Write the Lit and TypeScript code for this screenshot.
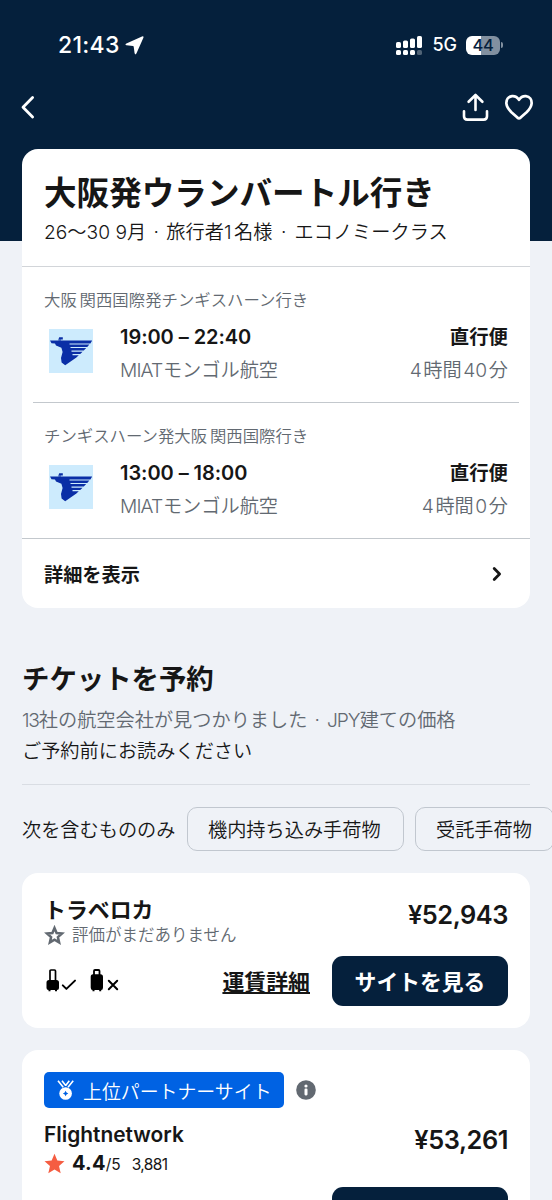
import { LitElement, html, css, svg } from "lit";
import { customElement, property } from "lit/decorators.js";

const airlineLogo = html`<svg class="logo" width="44" height="44" viewBox="0 0 44 44">
  <rect width="44" height="44" fill="#cdebfd" />
  <g fill="#0a2ea6">
    <path d="M1 11.6H43.2L41.4 14.4H20.5V15.5H40.4L38.2 18H21.5V19.1H37.2L34.8 21.6H22.5V22.7H33.6L31.2 25.1H23.5V26.2H29.8L27.4 28.4L16.2 36.3L12.6 33.6L12 29L13.6 23L12.4 18.8L7 16.6L6 14.6L2.5 14.2Z" />
    <path d="M10.2 8.2H13.8V10.4H9.4Z" />
    <path d="M9.4 10H12V12H9.4Z" opacity=".5" />
  </g>
</svg>`;

const starPath =
  "M10 .8L12.7 7.2L19.5 7.8L14.3 12.4L15.9 19.2L10 15.6L4.1 19.2L5.7 12.4L.5 7.8L7.3 7.2Z";

@customElement("flight-leg")
export class FlightLeg extends LitElement {
  @property() route = "";
  @property() times = "";
  @property() duration = "";

  static styles = css`
    :host { display: block; height: 135px; box-sizing: border-box; padding: 22px 22px 0; font-weight: 350; }
    .route { font-size: 16.4px; line-height: 22px; color: #626971; white-space: pre; word-spacing: -1.8px; }
    .row { display: flex; margin-top: 10px; }
    .logo { display: block; margin: 8px 27px 0 5px; flex: none; }
    .main { flex: 1; }
    .side { text-align: right; }
    .strong { font-size: 19.4px; line-height: 32px; font-weight: 600; color: #161616; }
    .time { font-size: 20px; letter-spacing: -0.05px; }
    .sub { font-size: 19.2px; line-height: 32px; margin-top: 1px; color: #626971; white-space: pre; word-spacing: -3.8px; }
    .latin { letter-spacing: -0.9px; }
  `;

  render() {
    return html`
      <div class="route">${this.route}</div>
      <div class="row">
        ${airlineLogo}
        <div class="main">
          <div class="strong time">${this.times}</div>
          <div class="sub"><span class="latin">MIAT </span>モンゴル航空</div>
        </div>
        <div class="side">
          <div class="strong">直行便</div>
          <div class="sub">${this.duration}</div>
        </div>
      </div>
    `;
  }
}

@customElement("app-root")
export class AppRoot extends LitElement {
  static styles = css`
    :host {
      display: block;
      width: 552px;
      height: 1200px;
      overflow: hidden;
      box-sizing: border-box;
      color: #161616;
      font-family: Inter, "Noto Sans CJK JP", sans-serif;
      font-weight: 350;
      background: linear-gradient(#05203c 241.5px, #eff2f7 241.5px);
    }
    svg { display: block; flex: none; }
    .status { height: 90px; display: flex; align-items: center; color: #fff; padding: 0 49px 0 58px; box-sizing: border-box; }
    .clock { font-size: 23px; font-weight: 550; letter-spacing: 0.3px; line-height: 30px; }
    .loc { margin-left: 5px; }
    .grow { flex: 1; }
    .net { font-size: 18px; font-weight: 450; margin: 0 9px 0 9px; line-height: 30px; }
    .battery { width: 34px; height: 19px; border-radius: 6px; background: linear-gradient(90deg, #fff 44%, #8290a0 44%); color: #05203c; font-size: 16.5px; font-weight: 550; letter-spacing: -0.4px; line-height: 19px; text-align: center; }
    .nub { width: 2px; height: 6px; margin-left: 1px; border-radius: 0 2px 2px 0; background: #8290a0; }
    .nav { height: 59px; display: flex; align-items: flex-start; padding: 2px 18px 0 20px; box-sizing: border-box; }
    .heart { margin-left: 15px; }
    .card { margin: 0 22px; background: #fff; border-radius: 16px; box-sizing: border-box; }
    .head { height: 118px; box-sizing: border-box; padding: 22px 22px 0; border-bottom: 1px solid #d2d5d9; }
    .title { font-size: 32.6px; line-height: 44px; font-weight: 700; }
    .desc { font-size: 19.2px; line-height: 30px; margin-top: 2px; white-space: pre; }
    .d1 { margin: 0 2px 0 2px; }
    .d2 { margin: 0 2.8px 0 3.2px; }
    .one { margin: 0 2.5px 0 0; }
    .rule { height: 1px; margin: 0 11px; background: #c3c8cd; }
    .trip { height: 459px; }
    .more { height: 70px; border-top: 1px solid #c3c8cd; display: flex; align-items: center; justify-content: space-between; padding: 0 28px 0 22px; font-size: 19.2px; font-weight: 600; box-sizing: border-box; }
    .section { margin: 49px 22px 0; height: 128px; border-bottom: 1px solid #d9dde3; box-sizing: border-box; }
    .h2 { font-size: 27.4px; line-height: 44px; font-weight: 700; }
    .grey { font-size: 19.2px; line-height: 30px; margin-top: 4px; color: #626971; }
    .grey .num { letter-spacing: -1.2px; }
    .grey .dot { margin: 0 1.3px 0 1.6px; }
    .grey .cur { letter-spacing: -1px; margin-left: 0.4px; }
    .read { font-size: 19.2px; line-height: 33px; }
    .filters { display: flex; align-items: center; margin: 22px 0 22px 22px; font-size: 19.2px; }
    .lead { width: 165px; flex: none; }
    .chip { flex: none; width: 217px; height: 44px; box-sizing: border-box; border: 1.5px solid #c1c7cf; border-radius: 10px; display: flex; align-items: center; padding-left: 20px; margin-right: 11px; }
    .chip.last { width: 139px; margin-right: 0; }
    .offer { display: flex; flex-direction: column; height: 155px; padding: 22px 22px 0; }
    .top { display: flex; justify-content: space-between; height: 50px; }
    .vendor { font-size: 21.9px; line-height: 30px; font-weight: 600; }
    .rating { display: flex; align-items: center; font-size: 16.5px; line-height: 21px; color: #626971; gap: 7px; }
    .price { font-size: 25.4px; font-weight: 600; line-height: 40px; letter-spacing: -0.45px; }
    .bottom { display: flex; align-items: center; margin-top: 10px; height: 51px; }
    .bags { margin-bottom: 1px; }
    .fare { font-size: 21.9px; font-weight: 600; text-decoration: underline; text-decoration-thickness: 1.5px; text-underline-offset: 2px; margin-right: 22px; }
    .btn { width: 176px; height: 50px; flex: none; background: #05203c; color: #fff; border-radius: 11px; font-size: 21.8px; font-weight: 600; display: flex; align-items: center; justify-content: center; }
    .partner { margin-top: 22px; height: 210px; }
    .badges { display: flex; align-items: center; height: 36px; }
    .badge { width: 240px; height: 36px; box-sizing: border-box; padding-left: 12px; display: flex; align-items: center; gap: 8px; border-radius: 5px; background: #0062e3; color: #fff; font-size: 18.9px; margin-right: 12px; }
    .ptop { display: flex; justify-content: space-between; margin-top: 12px; height: 57px; }
    .pname { font-size: 20.9px; line-height: 30px; font-weight: 600; }
    .score { display: flex; align-items: center; height: 26px; font-size: 15.5px; font-weight: 400; }
    .score b { font-size: 20px; font-weight: 700; margin-left: 7px; letter-spacing: 0.2px; }
    .count { margin-left: 11px; letter-spacing: -0.6px; }
    .score .base { display: flex; align-items: baseline; }
    .right { display: flex; justify-content: flex-end; margin-top: 10px; }
  `;

  private bars() {
    const tops = [6, 4.5, 2.5, 0];
    return tops.map(
      (y, i) => svg`
        <rect x=${i * 7} y=${y} width="5" height=${12 - y} rx="1.6" fill="#fff" />
        <rect x=${i * 7} y="14" width="5" height="5" rx="1.6" fill="#fff" opacity=${i === 3 ? 0.3 : 1} />`
    );
  }

  render() {
    return html`
      <div class="status">
        <span class="clock">21:43</span>
        <svg class="loc" width="19" height="19" viewBox="0 0 19 19">
          <path d="M17 .5Q19 -.2 18.4 1.7L11.4 17.6Q10.4 19.4 9.6 17.3L8.7 10.8Q8.6 10.2 8 10.1L1.5 9.3Q-.5 8.5 1.4 7.4Z" fill="#fff" />
        </svg>
        <span class="grow"></span>
        <svg width="27" height="19" viewBox="0 0 27 19">${this.bars()}</svg>
        <span class="net">5G</span>
        <span class="battery">44</span><span class="nub"></span>
      </div>
      <div class="nav">
        <svg width="15" height="30" viewBox="0 0 15 30" fill="none" stroke="#fff" stroke-width="2.8" stroke-linecap="round" stroke-linejoin="round">
          <path d="M12.6 5.6L3 15.3L12.6 25" />
        </svg>
        <span class="grow"></span>
        <svg width="27" height="30" viewBox="0 0 27 30" fill="none" stroke="#fff" stroke-width="2.6" stroke-linecap="round" stroke-linejoin="round">
          <path d="M13.5 18V3.4M6.6 9.8L13.5 3L20.4 9.8M2 19.3V24.2Q2 27.6 5.4 27.6H21.6Q25 27.6 25 24.2V19.3" />
        </svg>
        <svg class="heart" width="30" height="30" viewBox="0 0 30 30" fill="none" stroke="#fff" stroke-width="2.7" stroke-linejoin="round">
          <path d="M15 7.9C13.1 4.8 10.6 3.9 8.1 4.1C4.2 4.5 2.1 7.7 2.4 11.6C2.7 15.1 4.8 17.6 7.4 20.2L13.4 25.6Q15 26.9 16.6 25.6L22.6 20.2C25.2 17.6 27.3 15.1 27.6 11.6C27.9 7.7 25.8 4.5 21.9 4.1C19.4 3.9 16.9 4.8 15 7.9Z" />
        </svg>
      </div>

      <div class="card trip">
        <div class="head">
          <div class="title">大阪発ウランバートル行き</div>
          <div class="desc">26～30 9月<span class="d1"> · </span>旅行者<span class="one">1</span>名様<span class="d2"> · </span>エコノミークラス</div>
        </div>
        <flight-leg route="大阪 関西国際発チンギスハーン行き" times="19:00 – 22:40" duration="4 時間 40 分"></flight-leg>
        <div class="rule"></div>
        <flight-leg route="チンギスハーン発大阪 関西国際行き" times="13:00 – 18:00" duration="4 時間 0 分"></flight-leg>
        <div class="more">
          <span>詳細を表示</span>
          <svg width="10" height="16" viewBox="0 0 10 16" fill="none" stroke="#161616" stroke-width="2.8" stroke-linecap="round" stroke-linejoin="round">
            <path d="M2.2 2.6L7.6 8L2.2 13.4" />
          </svg>
        </div>
      </div>

      <div class="section">
        <div class="h2">チケットを予約</div>
        <div class="grey"><span class="num">13</span>社の航空会社が見つかりました<span class="dot"> · </span><span class="cur">JPY</span>建ての価格</div>
        <div class="read">ご予約前にお読みください</div>
      </div>

      <div class="filters">
        <span class="lead">次を含むもののみ</span>
        <span class="chip">機内持ち込み手荷物</span>
        <span class="chip last">受託手荷物</span>
      </div>

      <div class="card offer">
        <div class="top">
          <div>
            <div class="vendor">トラベロカ</div>
            <div class="rating">
              <svg width="21" height="21" viewBox="0 0 21 21">
                <path fill="none" stroke="#626971" stroke-width="2.5" d="M10.5 3L12.6 8L18 8.5L13.9 12.1L15.1 17.4L10.5 14.6L5.9 17.4L7.1 12.1L3 8.5L8.4 8Z" />
              </svg>
              <span>評価がまだありません</span>
            </div>
          </div>
          <div class="price">¥52,943</div>
        </div>
        <div class="bottom">
          <svg class="bags" width="76" height="24" viewBox="0 0 76 24" fill="none" stroke="#000" stroke-width="2" stroke-linecap="round" stroke-linejoin="round">
            <path d="M6 12.5V3Q6 2 7 2H10.5Q11.5 2 11.5 3V12.5" stroke-width="1.7" />
            <path d="M5 12H12.5Q15 12 15 14.5V20Q15 22 13 22V23.2H11V22H6.5V23.2H4.5V22Q2.5 22 2.5 20V14.5Q2.5 12 5 12Z" fill="#000" stroke="none" />
            <path d="M18.8 17.4L22.4 20.9L31 12.6" />
            <path d="M50 7V3Q50 2 51 2H54.5Q55.5 2 55.5 3V7" stroke-width="1.8" />
            <path d="M49 6.3H56.5Q59 6.3 59 9V19.5Q59 22 57.2 22V23.2H55.2V22H50.5V23.2H48.5V22Q46.7 22 46.7 19.5V9Q46.7 6.3 49 6.3Z" fill="#000" stroke="none" />
            <path d="M64.8 12.8L73.2 21.2M73.2 12.8L64.8 21.2" />
          </svg>
          <span class="grow"></span>
          <span class="fare">運賃詳細</span>
          <span class="btn">サイトを見る</span>
        </div>
      </div>

      <div class="card offer partner">
        <div class="badges">
          <div class="badge">
            <svg width="19" height="21" viewBox="0 0 19 21" fill="none" stroke="#fff" stroke-width="1.6">
              <path d="M2 .8L7.2 7.2M6 .8L9.7 5.4M17.2 .8L12 7.2M13.3 .8L9.7 5.4" />
              <circle cx="9.6" cy="13.5" r="6.3" fill="#fff" stroke="none" />
              <path d="M9.6 10.8L10.5 12.6L12.3 13.5L10.5 14.4L9.6 16.2L8.7 14.4L6.9 13.5L8.7 12.6Z" fill="#0062e3" stroke="none" />
            </svg>
            <span>上位パートナーサイト</span>
          </div>
          <svg width="20" height="20" viewBox="0 0 20 20">
            <circle cx="10" cy="10" r="9.8" fill="#626971" />
            <circle cx="10" cy="6" r="1.6" fill="#fff" />
            <rect x="8.5" y="8.6" width="3" height="6.8" rx="1.1" fill="#fff" />
          </svg>
        </div>
        <div class="ptop">
          <div>
            <div class="pname">Flightnetwork</div>
            <div class="score">
              <svg width="21" height="21" viewBox="0 0 20 20"><path fill="#f55d42" d=${starPath} /></svg>
              <span class="base"><b>4.4</b><span>/5</span><span class="count">3,881</span></span>
            </div>
          </div>
          <div class="price">¥53,261</div>
        </div>
        <div class="right"><span class="btn"></span></div>
      </div>
    `;
  }
}
